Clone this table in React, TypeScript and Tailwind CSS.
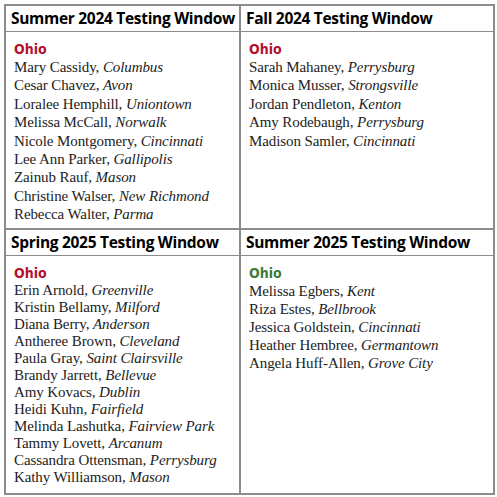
const sections = [
  {
    title: "Summer 2024 Testing Window",
    color: "text-[#b3122e]",
    lh: "leading-[18.4px]",
    people: [
      ["Mary Cassidy", "Columbus"],
      ["Cesar Chavez", "Avon"],
      ["Loralee Hemphill", "Uniontown"],
      ["Melissa McCall", "Norwalk"],
      ["Nicole Montgomery", "Cincinnati"],
      ["Lee Ann Parker", "Gallipolis"],
      ["Zainub Rauf", "Mason"],
      ["Christine Walser", "New Richmond"],
      ["Rebecca Walter", "Parma"],
    ],
  },
  {
    title: "Fall 2024 Testing Window",
    color: "text-[#b3122e]",
    lh: "leading-[18.4px]",
    people: [
      ["Sarah Mahaney", "Perrysburg"],
      ["Monica Musser", "Strongsville"],
      ["Jordan Pendleton", "Kenton"],
      ["Amy Rodebaugh", "Perrysburg"],
      ["Madison Samler", "Cincinnati"],
    ],
  },
  {
    title: "Spring 2025 Testing Window",
    color: "text-[#b3122e]",
    lh: "leading-[17px]",
    people: [
      ["Erin Arnold", "Greenville"],
      ["Kristin Bellamy", "Milford"],
      ["Diana Berry", "Anderson"],
      ["Antheree Brown", "Cleveland"],
      ["Paula Gray", "Saint Clairsville"],
      ["Brandy Jarrett", "Bellevue"],
      ["Amy Kovacs", "Dublin"],
      ["Heidi Kuhn", "Fairfield"],
      ["Melinda Lashutka", "Fairview Park"],
      ["Tammy Lovett", "Arcanum"],
      ["Cassandra Ottensman", "Perrysburg"],
      ["Kathy Williamson", "Mason"],
    ],
  },
  {
    title: "Summer 2025 Testing Window",
    color: "text-[#3d7c3a]",
    lh: "leading-[18px]",
    people: [
      ["Melissa Egbers", "Kent"],
      ["Riza Estes", "Bellbrook"],
      ["Jessica Goldstein", "Cincinnati"],
      ["Heather Hembree", "Germantown"],
      ["Angela Huff-Allen", "Grove City"],
    ],
  },
];

function Cell({ s, left }: { s: (typeof sections)[number]; left: boolean }) {
  return (
    <div className={`flex flex-col h-full ${left ? "border-r-2 border-[#8c8c8c]" : ""}`}>
      <div className="h-[26px] flex items-center pl-[5px] border-b border-[#8c8c8c] font-['Open_Sans',sans-serif] font-bold text-[15.5px] text-black tracking-[-0.3px] whitespace-nowrap">
        {s.title}
      </div>
      <div className="pl-[8px] pt-[8px]">
        <p className={`font-['Liberation_Sans_Narrow','DejaVu_Sans_Condensed',sans-serif] font-bold text-[14px] leading-[18px] ${s.color}`}>
          Ohio
        </p>
        {s.people.map(([name, city]) => (
          <p key={name + city} className={`font-['Liberation_Serif',serif] text-[15px] text-[#222] tracking-[-0.1px] ${s.lh}`}>
            {name}, <i>{city}</i>
          </p>
        ))}
      </div>
    </div>
  );
}

export default function App() {
  return (
    <div className="w-[497px] h-[497px] bg-white pt-[4px] pl-[4px]">
      <div className="w-[491px] h-[491px] border-2 border-[#8c8c8c] grid grid-cols-[235px_1fr] grid-rows-[224px_1fr]">
        <div className="border-b-2 border-[#8c8c8c]">
          <Cell s={sections[0]} left />
        </div>
        <div className="border-b-2 border-[#8c8c8c]">
          <Cell s={sections[1]} left={false} />
        </div>
        <Cell s={sections[2]} left />
        <Cell s={sections[3]} left={false} />
      </div>
    </div>
  );
}
